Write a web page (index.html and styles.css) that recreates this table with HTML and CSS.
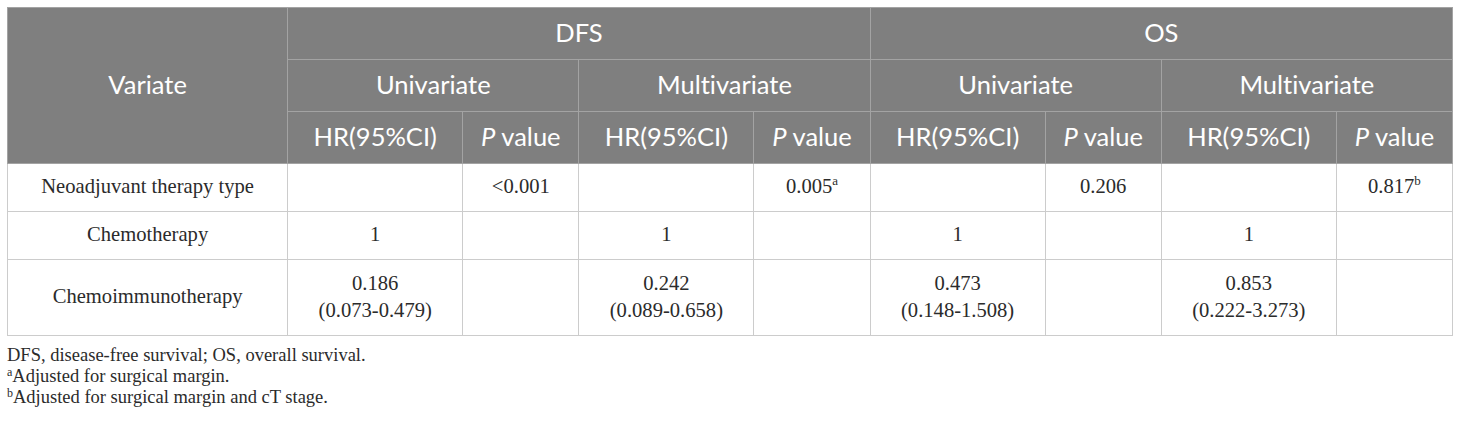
FILE: index.html
```html
<!DOCTYPE html>
<html>
<head>
<meta charset="utf-8">
<link rel="stylesheet" href="styles.css">
</head>
<body>
<div class="wrap">
<table class="tbl">
<colgroup>
<col class="c-var">
<col class="c-hr"><col class="c-p">
<col class="c-hr"><col class="c-p">
<col class="c-hr"><col class="c-p">
<col class="c-hr"><col class="c-p">
</colgroup>
<thead>
<tr class="h1">
<th rowspan="3">Variate</th>
<th colspan="4">DFS</th>
<th colspan="4">OS</th>
</tr>
<tr class="h2">
<th colspan="2">Univariate</th>
<th colspan="2">Multivariate</th>
<th colspan="2">Univariate</th>
<th colspan="2">Multivariate</th>
</tr>
<tr class="h3">
<th>HR(95%CI)</th><th><i>P</i> value</th>
<th>HR(95%CI)</th><th><i>P</i> value</th>
<th>HR(95%CI)</th><th><i>P</i> value</th>
<th>HR(95%CI)</th><th><i>P</i> value</th>
</tr>
</thead>
<tbody>
<tr class="r1">
<td>Neoadjuvant therapy type</td>
<td></td><td>&lt;0.001</td>
<td></td><td>0.005<sup>a</sup></td>
<td></td><td>0.206</td>
<td></td><td>0.817<sup>b</sup></td>
</tr>
<tr class="r2">
<td>Chemotherapy</td>
<td>1</td><td></td>
<td>1</td><td></td>
<td>1</td><td></td>
<td>1</td><td></td>
</tr>
<tr class="r3">
<td>Chemoimmunotherapy</td>
<td>0.186<br>(0.073-0.479)</td><td></td>
<td>0.242<br>(0.089-0.658)</td><td></td>
<td>0.473<br>(0.148-1.508)</td><td></td>
<td>0.853<br>(0.222-3.273)</td><td></td>
</tr>
</tbody>
</table>
<div class="notes">
<p>DFS, disease-free survival; OS, overall survival.</p>
<p><sup>a</sup>Adjusted for surgical margin.</p>
<p><sup>b</sup>Adjusted for surgical margin and cT stage.</p>
</div>
</div>
</body>
</html>
```
FILE: styles.css
```css
html, body {
  margin: 0;
  padding: 0;
  background: #ffffff;
}
.wrap {
  padding: 7px 8px 0 7px;
}
.tbl {
  border-collapse: collapse;
  table-layout: fixed;
  width: 1446px;
}
.c-var { width: 280px; }
.c-hr { width: 175px; }
.c-p { width: 116px; }
.tbl th {
  background: #7f7f7f;
  color: #ffffff;
  font-family: Lato, "Open Sans", sans-serif;
  font-weight: 400;
  font-size: 25.5px;
  font-variant-ligatures: none;
  border: 1px solid #a3a3a3;
  text-align: center;
  padding: 0 0 3px 0;
  height: 48px;
}
.tbl td {
  font-family: "Liberation Serif", "Times New Roman", serif;
  font-size: 20.6px;
  color: #2b2b2b;
  border: 1px solid #cccccc;
  text-align: center;
  padding: 0 0 2px 0;
  line-height: 27px;
}
.tbl tr.r1 td, .tbl tr.r2 td { height: 45px; }
.tbl tr.r3 td { height: 73px; }
.tbl sup {
  font-size: 13px;
  line-height: 0;
  vertical-align: 8px;
}
.notes {
  margin-top: 9px;
  font-family: "Liberation Serif", "Times New Roman", serif;
  font-size: 18.5px;
  color: #2b2b2b;
}
.notes p {
  margin: 0;
  line-height: 21px;
}
.notes sup {
  font-size: 12px;
  line-height: 0;
  vertical-align: 6px;
}
```
